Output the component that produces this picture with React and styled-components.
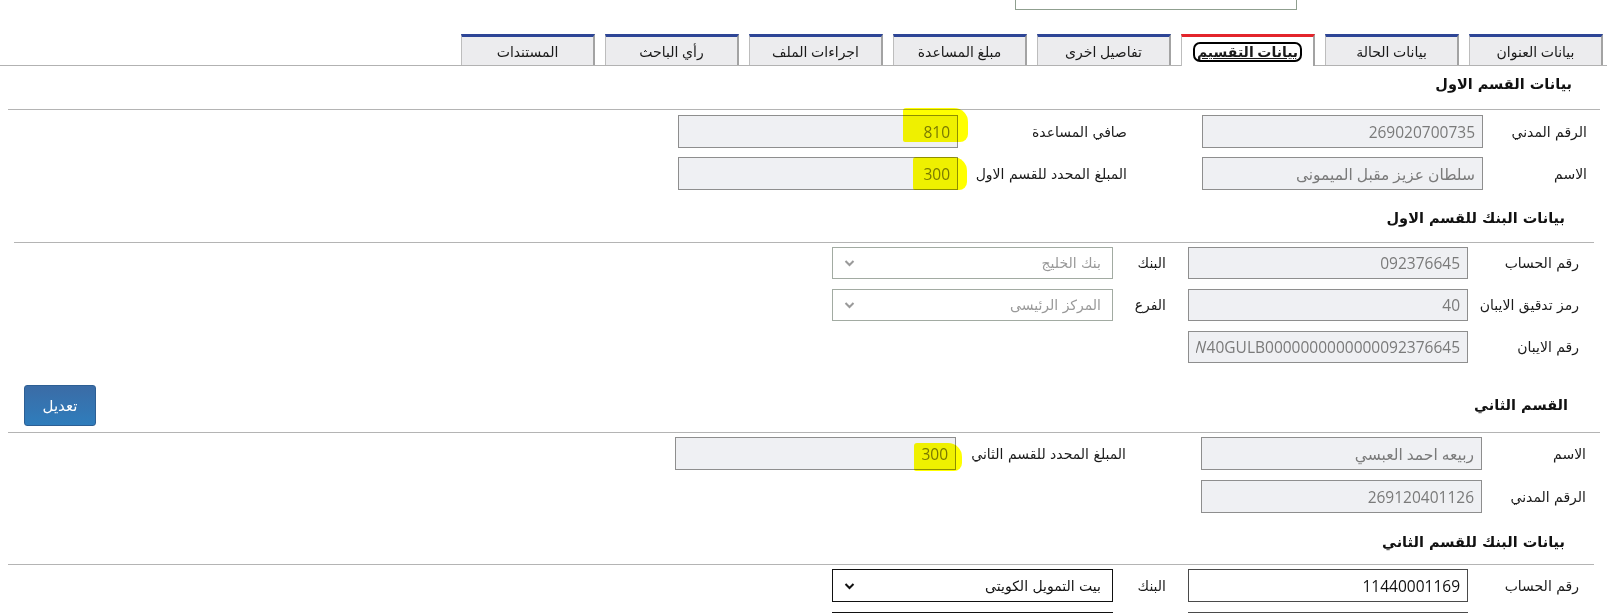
import React from "react";
import styled, { createGlobalStyle, css } from "styled-components";

const Global = createGlobalStyle`
  html, body { margin: 0; padding: 0; overflow: hidden; background: #fff; }
  * { box-sizing: border-box; }
  body { font-family: "Open Sans", "DejaVu Sans", sans-serif; color: #1c1c1c; }
`;

const Page = styled.div`
  direction: rtl;
  width: 1607px;
  height: 613px;
  overflow: hidden;
`;

const SearchBox = styled.div`
  width: 282px;
  height: 10px;
  margin-right: 310px;
  border: 1px solid #8f9f8f;
  border-top: none;
`;

const TabBar = styled.div`
  display: flex;
  align-items: flex-end;
  gap: 10px;
  height: 32px;
  margin-top: 24px;
  padding-right: 4px;
  border-bottom: 1px solid #b2b2b2;
`;

const Tab = styled.div`
  width: 134px;
  height: 31px;
  display: flex;
  align-items: center;
  justify-content: center;
  padding-top: 1px;
  font-size: 14px;
  color: #1a1a1a;
  background: #ececee;
  border-top: 3px solid #2d4596;
  border-left: 1px solid #bdbdbd;
  border-right: 2px solid #a3a3a3;
  ${(p) =>
    p.$active &&
    css`
      height: 32px;
      margin-bottom: -1px;
      background: #fff;
      border-top-color: #e3242b;
      position: relative;
    `}
`;

const TabText = styled.span`
  ${(p) =>
    p.$active &&
    css`
      font-weight: bold;
      text-decoration: underline;
      outline: 2px solid #000;
      border-radius: 5px;
      padding: 0 2px;
      line-height: 16px;
    `}
`;

const SectionHead = styled.div`
  display: flex;
  align-items: flex-start;
  justify-content: space-between;
  height: ${(p) => p.$h}px;
  padding-top: ${(p) => p.$pt}px;
  padding-right: ${(p) => p.$pr}px;
  margin-right: ${(p) => p.$mr}px;
  margin-left: ${(p) => p.$ml}px;
  border-bottom: 1px solid #b4b4b4;
`;

const HeadTitle = styled.h3`
  margin: 0;
  font-family: "DejaVu Sans", sans-serif;
  font-size: 14.5px;
  font-weight: bold;
  color: #111;
  line-height: ${(p) => p.$lh || 20}px;
`;

const EditButton = styled.button`
  width: 72px;
  height: 41px;
  margin-left: 16px;
  border: 1px solid #2d5f94;
  border-radius: 3px;
  background: linear-gradient(#3b6ca6, #2f7dbc);
  color: #fff;
  font-family: "DejaVu Sans", sans-serif;
  font-size: 15px;
  padding: 0;
`;

const Form = styled.div`
  display: grid;
  grid-template-columns: ${(p) => p.$cols};
  grid-auto-rows: ${(p) => p.$rowH}px;
  row-gap: ${(p) => p.$gap}px;
  margin-top: ${(p) => p.$mt}px;
  padding-right: ${(p) => p.$pr}px;
`;

const Label = styled.div`
  display: flex;
  align-items: center;
  padding-right: ${(p) => p.$pr || 0}px;
  font-family: "DejaVu Sans", sans-serif;
  font-size: 14px;
  color: #1a1a1a;
  white-space: nowrap;
`;

const Cell = styled.div`
  position: relative;
`;

const TextInput = styled.input`
  width: 100%;
  height: 100%;
  margin: 0;
  padding: 0 7px;
  direction: rtl;
  font-family: "Open Sans", "DejaVu Sans", sans-serif;
  font-size: 15.5px;
  outline: none;
  ${(p) =>
    p.$editable
      ? css`
          background: #fff;
          border: 1px solid #4a4a4a;
          color: #111;
        `
      : css`
          background: #eff0f3;
          border: 1px solid #8e8e8e;
          color: #7a7a7a;
        `}
`;

const SelectBox = styled.div`
  display: flex;
  align-items: center;
  justify-content: space-between;
  height: 100%;
  padding: 0 11px;
  font-family: "DejaVu Sans", sans-serif;
  font-size: 14px;
  background: #fff;
  ${(p) =>
    p.$enabled
      ? css`
          border: 1px solid #111;
          color: #111;
        `
      : css`
          border: 1px solid #a2aba2;
          color: #999;
        `}
`;

const Highlight = styled.span`
  position: absolute;
  background: #ffff00;
  mix-blend-mode: multiply;
  pointer-events: none;
  border-radius: 3px 14px 8px 2px;
`;

const Chevron = ({ color }) => (
  <svg width="11" height="8" viewBox="0 0 11 8">
    <polyline points="1.5,2 5.5,6 9.5,2" fill="none" stroke={color} strokeWidth="2" />
  </svg>
);

const tabs = [
  "بيانات العنوان",
  "بيانات الحالة",
  "بيانات التقسيم",
  "تفاصيل اخرى",
  "مبلغ المساعدة",
  "اجراءات الملف",
  "رأي الباحث",
  "المستندات",
];

const Field = ({ value, editable, hl }) => (
  <Cell>
    <TextInput readOnly value={value} $editable={editable} />
    {hl && <Highlight style={hl} />}
  </Cell>
);

const Select = ({ value, enabled }) => (
  <SelectBox $enabled={enabled}>
    <span>{value}</span>
    <Chevron color={enabled ? "#111" : "#9a9a9a"} />
  </SelectBox>
);

export default function App() {
  return (
    <Page>
      <Global />
      <SearchBox />
      <TabBar>
        {tabs.map((t, i) => (
          <Tab key={t} $active={i === 2}>
            <TabText $active={i === 2}>{t}</TabText>
          </Tab>
        ))}
      </TabBar>

      <SectionHead $h={44} $pt={8} $pr={28} $mr={7} $ml={8}>
        <HeadTitle>بيانات القسم الاول</HeadTitle>
      </SectionHead>
      <Form $cols="104px 281px 244px 280px" $rowH={33} $gap={9} $mt={5} $pr={20}>
        <Label>الرقم المدني</Label>
        <Field value="269020700735" />
        <Label $pr={75}>صافي المساعدة</Label>
        <Field value="810" hl={{ right: -10, top: -7, width: 65, height: 34 }} />
        <Label>الاسم</Label>
        <Field value="سلطان عزيز مقبل الميمونى" />
        <Label $pr={75}>المبلغ المحدد للقسم الاول</Label>
        <Field value="300" hl={{ right: -9, top: 0, width: 54, height: 33 }} />
      </Form>

      <SectionHead $h={53} $pt={18} $pr={29} $mr={13} $ml={14}>
        <HeadTitle>بيانات البنك للقسم الاول</HeadTitle>
      </SectionHead>
      <Form $cols="111px 280px 75px 281px" $rowH={32} $gap={10} $mt={4} $pr={28}>
        <Label>رقم الحساب</Label>
        <Field value="092376645" />
        <Label $pr={22}>البنك</Label>
        <Select value="بنك الخليج" />
        <Label>رمز تدقيق الايبان</Label>
        <Field value="40" />
        <Label $pr={22}>الفرع</Label>
        <Select value="المركز الرئيسى" />
        <Label>رقم الايبان</Label>
        <Field value="KW40GULB0000000000000092376645" />
      </Form>

      <SectionHead $h={70} $pt={22} $pr={32} $mr={7} $ml={8}>
        <HeadTitle $lh={41}>القسم الثاني</HeadTitle>
        <EditButton>تعديل</EditButton>
      </SectionHead>
      <Form $cols="104px 281px 245px 281px" $rowH={33} $gap={10} $mt={4} $pr={21}>
        <Label>الاسم</Label>
        <Field value="ربيعه احمد العبسي" />
        <Label $pr={75}>المبلغ المحدد للقسم الثاني</Label>
        <Field value="300" hl={{ right: -6, top: 6, width: 48, height: 28 }} />
        <Label>الرقم المدني</Label>
        <Field value="269120401126" />
      </Form>

      <SectionHead $h={52} $pt={19} $pr={29} $mr={13} $ml={8}>
        <HeadTitle>بيانات البنك للقسم الثاني</HeadTitle>
      </SectionHead>
      <Form $cols="111px 280px 75px 281px" $rowH={33} $gap={10} $mt={4} $pr={28}>
        <Label>رقم الحساب</Label>
        <Field value="11440001169" editable />
        <Label $pr={22}>البنك</Label>
        <Select value="بيت التمويل الكويتى" enabled />
        <Label />
        <Field value="" editable />
        <Label />
        <Select value="" enabled />
      </Form>
    </Page>
  );
}
